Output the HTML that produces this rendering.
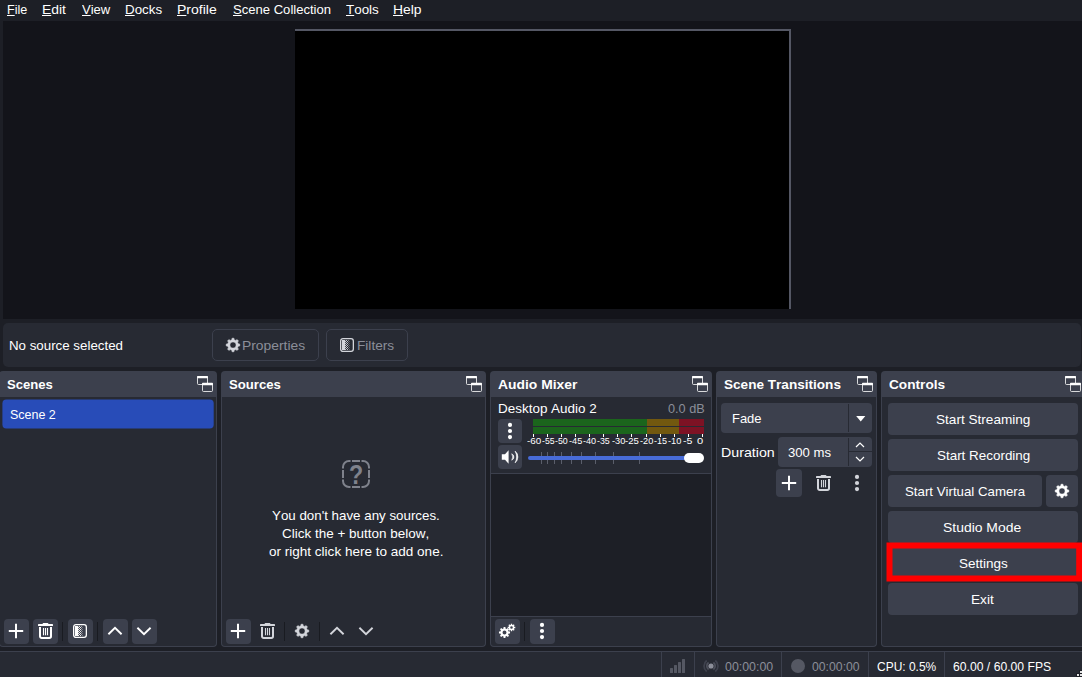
<!DOCTYPE html>
<html lang="en">
<head>
<meta charset="utf-8">
<title>OBS Studio</title>
<style>
html,body{margin:0;padding:0;}
body{width:1082px;height:677px;overflow:hidden;background:#1d1f26;position:relative;
 font-family:"Liberation Sans",sans-serif;font-size:13px;color:#fff;}
.a{position:absolute;}
.t{position:absolute;white-space:nowrap;line-height:16px;height:16px;transform-origin:0 50%;font-kerning:none;}
.c{text-align:center;transform-origin:50% 50%;}
.b{font-weight:bold;}
.m{color:#8b8e99;}
u{text-decoration:underline;text-underline-offset:1px;text-decoration-thickness:1px;}
#preview{left:3px;top:21px;width:1079px;height:298px;background:#13141a;}
#canvas{left:295px;top:29px;width:496px;height:280px;background:#545764;}
#canvas i{position:absolute;left:0;top:2px;width:494px;height:278px;background:#000;}
#ctx{left:3px;top:323px;width:1078px;height:44px;background:#272a33;border-radius:5px;}
.cbtn{position:absolute;top:329px;height:32px;border:1px solid #3c404d;border-radius:5px;box-sizing:border-box;}
.title{position:absolute;top:371px;height:26px;background:#3c404d;border-radius:4px 4px 0 0;}
.dock{position:absolute;top:397px;height:250px;background:#272a33;border:1px solid #3c404d;border-top:none;
 border-radius:0 0 4px 4px;box-sizing:border-box;}
.btn{position:absolute;background:#3c404d;border-radius:4px;}
.sep{position:absolute;width:1px;height:19px;top:622px;background:#191b21;}
svg{position:absolute;overflow:visible;}
#status{left:0;top:651px;width:1082px;height:26px;background:#272a33;border-top:1px solid #3c404d;box-sizing:border-box;}
.vs{position:absolute;top:652px;width:1px;height:25px;background:#3c404d;}
.tick{position:absolute;width:1px;background:#fff;}
.lbl{position:absolute;font-size:8.5px;line-height:10px;height:10px;white-space:nowrap;top:436px;transform-origin:50% 50%;}
</style>
</head>
<body>
<div class="t" style="left:6.67px;top:2px;transform:scaleX(0.9688);"><u>F</u>ile</div>
<div class="t" style="left:42.16px;top:2px;transform:scaleX(1.0688);"><u>E</u>dit</div>
<div class="t" style="left:81.94px;top:2px;transform:scaleX(1.0017);"><u>V</u>iew</div>
<div class="t" style="left:125.41px;top:2px;transform:scaleX(1.0265);"><u>D</u>ocks</div>
<div class="t" style="left:177.35px;top:2px;transform:scaleX(1.0794);"><u>P</u>rofile</div>
<div class="t" style="left:232.61px;top:2px;transform:scaleX(1.0050);"><u>S</u>cene Collection</div>
<div class="t" style="left:345.70px;top:2px;transform:scaleX(1.0313);"><u>T</u>ools</div>
<div class="t" style="left:393.36px;top:2px;transform:scaleX(1.0667);"><u>H</u>elp</div>
<div id="preview" class="a"></div><div id="canvas" class="a"><i></i></div>
<div id="ctx" class="a"></div>
<div class="t" style="left:8.51px;top:338px;transform:scaleX(1.0240);">No source selected</div>
<div class="cbtn" style="left:212px;width:107px"></div>
<div class="cbtn" style="left:326px;width:82px"></div>
<svg style="left:226px;top:338px" width="14" height="14" viewBox="0 0 14 14"><path d="M5.82 1.73 L5.98 0.23 L8.02 0.23 L8.18 1.73 L9.89 2.44 L11.07 1.49 L12.51 2.93 L11.56 4.11 L12.27 5.82 L13.77 5.98 L13.77 8.02 L12.27 8.18 L11.56 9.89 L12.51 11.07 L11.07 12.51 L9.89 11.56 L8.18 12.27 L8.02 13.77 L5.98 13.77 L5.82 12.27 L4.11 11.56 L2.93 12.51 L1.49 11.07 L2.44 9.89 L1.73 8.18 L0.23 8.02 L0.23 5.98 L1.73 5.82 L2.44 4.11 L1.49 2.93 L2.93 1.49 L4.11 2.44Z M3.90 7.00 a3.10 3.10 0 1 0 6.20 0 a3.10 3.10 0 1 0 -6.20 0Z" fill="#d3d5db" fill-rule="evenodd" stroke="#d3d5db" stroke-width=".5" stroke-linejoin="round"/></svg>
<svg style="left:340px;top:338px" width="14" height="14" viewBox="0 0 14 14"><rect x="0.65" y="0.65" width="12.7" height="12.7" rx="2.3" fill="none" stroke="#d3d5db" stroke-width="1.300"/><rect x="2" y="2" width="3.200" height="10" fill="#d3d5db"/><path d="M6 2h1v1h-1zM5 3h1v1h-1zM7 3h1v1h-1zM6 4h1v1h-1zM5 5h1v1h-1zM7 5h1v1h-1zM6 6h1v1h-1zM5 7h1v1h-1zM7 7h1v1h-1zM6 8h1v1h-1zM5 9h1v1h-1zM7 9h1v1h-1zM6 10h1v1h-1zM5 11h1v1h-1zM7 11h1v1h-1z" fill="#d3d5db" fill-opacity=".9"/><path d="M8 2h1v1h-1zM8 4h1v1h-1zM8 6h1v1h-1zM8 8h1v1h-1zM8 10h1v1h-1z" fill="#d3d5db" fill-opacity=".5"/><path d="M9 3h1v1h-1zM9 5h1v1h-1zM9 7h1v1h-1zM9 9h1v1h-1zM9 11h1v1h-1z" fill="#d3d5db" fill-opacity=".3"/></svg>
<div class="t m" style="left:242.36px;top:338px;transform:scaleX(1.0656);">Properties</div>
<div class="t m" style="left:356.58px;top:338px;transform:scaleX(1.0487);">Filters</div>
<div class="title" style="left:-1px;width:218px"></div>
<div class="dock" style="left:-1px;width:218px"></div>
<div class="t  b" style="left:6.82px;top:377px;transform:scaleX(1.0084);">Scenes</div>
<div class="title" style="left:221px;width:265px"></div>
<div class="dock" style="left:221px;width:265px"></div>
<div class="t  b" style="left:228.72px;top:377px;transform:scaleX(1.0120);">Sources</div>
<div class="title" style="left:490px;width:222px"></div>
<div class="dock" style="left:490px;width:222px"></div>
<div class="t  b" style="left:497.75px;top:377px;transform:scaleX(1.0667);">Audio Mixer</div>
<div class="title" style="left:716px;width:161px"></div>
<div class="dock" style="left:716px;width:161px"></div>
<div class="t  b" style="left:723.61px;top:377px;transform:scaleX(1.0444);">Scene Transitions</div>
<div class="title" style="left:881px;width:210px"></div>
<div class="dock" style="left:881px;width:210px"></div>
<div class="t  b" style="left:888.74px;top:377px;transform:scaleX(1.0501);">Controls</div>
<svg style="left:197px;top:376px" width="16" height="16" viewBox="0 0 16 16" fill="none" stroke="#fff"><rect x="0.5" y="0.5" width="10" height="8" rx="1" stroke-opacity=".8"/><rect x="0" y="0" width="11" height="2.2" rx=".8" fill="#fff" stroke="none"/><rect x="5.5" y="7.5" width="10" height="8" rx="1" fill="#3c404d" stroke-opacity=".8"/><rect x="5" y="6.800" width="11" height="2.4" rx=".8" fill="#fff" stroke="none"/></svg>
<svg style="left:466px;top:376px" width="16" height="16" viewBox="0 0 16 16" fill="none" stroke="#fff"><rect x="0.5" y="0.5" width="10" height="8" rx="1" stroke-opacity=".8"/><rect x="0" y="0" width="11" height="2.2" rx=".8" fill="#fff" stroke="none"/><rect x="5.5" y="7.5" width="10" height="8" rx="1" fill="#3c404d" stroke-opacity=".8"/><rect x="5" y="6.800" width="11" height="2.4" rx=".8" fill="#fff" stroke="none"/></svg>
<svg style="left:692px;top:376px" width="16" height="16" viewBox="0 0 16 16" fill="none" stroke="#fff"><rect x="0.5" y="0.5" width="10" height="8" rx="1" stroke-opacity=".8"/><rect x="0" y="0" width="11" height="2.2" rx=".8" fill="#fff" stroke="none"/><rect x="5.5" y="7.5" width="10" height="8" rx="1" fill="#3c404d" stroke-opacity=".8"/><rect x="5" y="6.800" width="11" height="2.4" rx=".8" fill="#fff" stroke="none"/></svg>
<svg style="left:857px;top:376px" width="16" height="16" viewBox="0 0 16 16" fill="none" stroke="#fff"><rect x="0.5" y="0.5" width="10" height="8" rx="1" stroke-opacity=".8"/><rect x="0" y="0" width="11" height="2.2" rx=".8" fill="#fff" stroke="none"/><rect x="5.5" y="7.5" width="10" height="8" rx="1" fill="#3c404d" stroke-opacity=".8"/><rect x="5" y="6.800" width="11" height="2.4" rx=".8" fill="#fff" stroke="none"/></svg>
<svg style="left:1065px;top:376px" width="16" height="16" viewBox="0 0 16 16" fill="none" stroke="#fff"><rect x="0.5" y="0.5" width="10" height="8" rx="1" stroke-opacity=".8"/><rect x="0" y="0" width="11" height="2.2" rx=".8" fill="#fff" stroke="none"/><rect x="5.5" y="7.5" width="10" height="8" rx="1" fill="#3c404d" stroke-opacity=".8"/><rect x="5" y="6.800" width="11" height="2.4" rx=".8" fill="#fff" stroke="none"/></svg>
<svg style="left:0;top:397px" width="217" height="34"><rect x="2.400" y="2.400" width="211.300" height="29.100" rx="4" fill="#284cb8"/></svg>
<div class="t" style="left:9.83px;top:407px;transform:scaleX(0.9600);">Scene 2</div>
<div class="btn" style="left:4px;top:619px;width:25px;height:25px"></div>
<div class="btn" style="left:33px;top:619px;width:25px;height:25px"></div>
<div class="btn" style="left:68px;top:619px;width:25px;height:25px"></div>
<div class="btn" style="left:103px;top:619px;width:25px;height:25px"></div>
<div class="btn" style="left:132px;top:619px;width:25px;height:25px"></div>
<div class="sep" style="left:62px"></div><div class="sep" style="left:97px"></div>
<svg style="left:8px;top:623px" width="16" height="16" viewBox="0 0 16 16"><path d="M8 0.800v14.400M0.800 8h14.400" stroke="#fff" stroke-width="2" fill="none"/></svg>
<svg style="left:38px;top:623px" width="15" height="16" viewBox="0 0 15 16" fill="none" stroke="#fff"><path d="M4.400 1.100L5.200 0h4.600l0.800 1.100z" fill="#fff" stroke="none"/><rect x="0" y="1" width="15" height="2" rx=".6" fill="#fff" stroke="none"/><path d="M2 4v9.300a1.700 1.700 0 0 0 1.700 1.700h7.600a1.700 1.700 0 0 0 1.700-1.700V4" stroke-width="2"/><path d="M5.500 5v7.200M7.500 5v7.200M9.500 5v7.200" stroke-width="1.100"/></svg>
<svg style="left:73px;top:624px" width="14" height="14" viewBox="0 0 14 14"><rect x="0.65" y="0.65" width="12.7" height="12.7" rx="2.3" fill="none" stroke="#fff" stroke-width="1.300"/><rect x="2" y="2" width="3.200" height="10" fill="#fff"/><path d="M6 2h1v1h-1zM5 3h1v1h-1zM7 3h1v1h-1zM6 4h1v1h-1zM5 5h1v1h-1zM7 5h1v1h-1zM6 6h1v1h-1zM5 7h1v1h-1zM7 7h1v1h-1zM6 8h1v1h-1zM5 9h1v1h-1zM7 9h1v1h-1zM6 10h1v1h-1zM5 11h1v1h-1zM7 11h1v1h-1z" fill="#fff" fill-opacity=".9"/><path d="M8 2h1v1h-1zM8 4h1v1h-1zM8 6h1v1h-1zM8 8h1v1h-1zM8 10h1v1h-1z" fill="#fff" fill-opacity=".5"/><path d="M9 3h1v1h-1zM9 5h1v1h-1zM9 7h1v1h-1zM9 9h1v1h-1zM9 11h1v1h-1z" fill="#fff" fill-opacity=".3"/></svg>
<svg style="left:115px;top:631.1px" width="1" height="1"><path d="M-6.6 3.2L0 -3.2L6.6 3.2" stroke="#fff" stroke-width="1.9" fill="none"/></svg>
<svg style="left:144px;top:630.8px" width="1" height="1"><path d="M-6.6 -3.2L0 3.2L6.6 -3.2" stroke="#fff" stroke-width="1.9" fill="none"/></svg>
<div class="btn" style="left:226px;top:619px;width:25px;height:25px"></div>
<div class="sep" style="left:284px"></div><div class="sep" style="left:319px"></div>
<svg style="left:230px;top:623px" width="16" height="16" viewBox="0 0 16 16"><path d="M8 0.800v14.400M0.800 8h14.400" stroke="#fff" stroke-width="2" fill="none"/></svg>
<svg style="left:260px;top:623px" width="15" height="16" viewBox="0 0 15 16" fill="none" stroke="#d3d5db"><path d="M4.400 1.100L5.200 0h4.600l0.800 1.100z" fill="#d3d5db" stroke="none"/><rect x="0" y="1" width="15" height="2" rx=".6" fill="#d3d5db" stroke="none"/><path d="M2 4v9.300a1.700 1.700 0 0 0 1.700 1.700h7.600a1.700 1.700 0 0 0 1.700-1.700V4" stroke-width="2"/><path d="M5.500 5v7.200M7.500 5v7.200M9.500 5v7.200" stroke-width="1.100"/></svg>
<svg style="left:295px;top:624px" width="14" height="14" viewBox="0 0 14 14"><path d="M5.82 1.73 L5.98 0.23 L8.02 0.23 L8.18 1.73 L9.89 2.44 L11.07 1.49 L12.51 2.93 L11.56 4.11 L12.27 5.82 L13.77 5.98 L13.77 8.02 L12.27 8.18 L11.56 9.89 L12.51 11.07 L11.07 12.51 L9.89 11.56 L8.18 12.27 L8.02 13.77 L5.98 13.77 L5.82 12.27 L4.11 11.56 L2.93 12.51 L1.49 11.07 L2.44 9.89 L1.73 8.18 L0.23 8.02 L0.23 5.98 L1.73 5.82 L2.44 4.11 L1.49 2.93 L2.93 1.49 L4.11 2.44Z M3.90 7.00 a3.10 3.10 0 1 0 6.20 0 a3.10 3.10 0 1 0 -6.20 0Z" fill="#d3d5db" fill-rule="evenodd" stroke="#d3d5db" stroke-width=".5" stroke-linejoin="round"/></svg>
<svg style="left:337px;top:631.1px" width="1" height="1"><path d="M-6.6 3.2L0 -3.2L6.6 3.2" stroke="#d3d5db" stroke-width="1.9" fill="none"/></svg>
<svg style="left:366px;top:630.8px" width="1" height="1"><path d="M-6.6 -3.2L0 3.2L6.6 -3.2" stroke="#d3d5db" stroke-width="1.9" fill="none"/></svg>
<svg style="left:342px;top:460px" width="28" height="28" viewBox="0 0 28 28" fill="none" stroke="#7f828c" stroke-width="2"><path d="M1 8.500V7a6 6 0 0 1 6-6h1.500M10 1h8M19.500 1H21a6 6 0 0 1 6 6v1.500M27 10v8M27 19.500V21a6 6 0 0 1-6 6h-1.500M18 27h-8M8.500 27H7a6 6 0 0 1-6-6v-1.500M1 18v-8"/><text transform="translate(14.100 24.400) scale(.84 1)" text-anchor="middle" font-family="Liberation Sans, sans-serif" font-weight="bold" font-size="27.700" fill="#7f828c" stroke="none">?</text></svg>
<div class="t" style="left:271.91px;top:508px;transform:scaleX(1.0255);">You don't have any sources.</div>
<div class="t" style="left:282.02px;top:526px;transform:scaleX(1.0366);">Click the + button below,</div>
<div class="t" style="left:268.83px;top:544px;transform:scaleX(1.0403);">or right click here to add one.</div>
<div class="a" style="left:491px;top:473px;width:220px;height:144px;background:#1d1f26;border-top:1px solid #3c404d;border-bottom:1px solid #3c404d;box-sizing:border-box"></div>
<div class="t" style="left:497.60px;top:401px;transform:scaleX(1.0355);">Desktop Audio 2</div>
<div class="t m" style="left:667.90px;top:401px;transform:scaleX(0.9755);">0.0 dB</div>
<div class="btn" style="left:498px;top:419px;width:24px;height:24px"></div>
<div class="btn" style="left:498px;top:445px;width:24px;height:24px"></div>
<svg style="left:510px;top:431px" width="1" height="1" fill="#fff"><circle cx="0" cy="-6.1" r="2.1"/><circle cx="0" cy="0" r="2.1"/><circle cx="0" cy="6.1" r="2.1"/></svg>
<svg style="left:501px;top:449px" width="18" height="16" viewBox="0 0 18 16"><path d="M0.800 5.200h3.200L7.600 1.300v13.400L4 10.800H0.800z" fill="#fff"/><path d="M10.700 4.800A3.430 3.430 0 0 1 10.700 11.200A5.600 5.600 0 0 0 10.700 4.800Z" fill="#fff" stroke="#fff" stroke-width=".6" stroke-linejoin="round"/><path d="M14.100 2.100A7.660 7.660 0 0 1 14.100 13.900A12.700 12.700 0 0 0 14.100 2.100Z" fill="#fff" stroke="#fff" stroke-width=".6" stroke-linejoin="round"/></svg>
<div class="a" style="left:533px;top:419px;width:171px;height:7px;background:linear-gradient(to right,#1b651c 0,#1b651c 114px,#72580f 114px,#72580f 146px,#7d1224 146px)"></div>
<div class="a" style="left:533px;top:427px;width:171px;height:7px;background:linear-gradient(to right,#1b651c 0,#1b651c 114px,#72580f 114px,#72580f 146px,#7d1224 146px)"></div>
<div class="tick" style="left:533px;top:434px;height:3px"></div>
<div class="t" style="left:527.46px;top:436px;transform:scaleX(1.0092);font-size:9.75px;line-height:10px;height:10px;">-60</div>
<div class="tick" style="left:547px;top:434px;height:3px"></div>
<div class="t" style="left:541.61px;top:436px;transform:scaleX(0.8906);font-size:9.75px;line-height:10px;height:10px;">-55</div>
<div class="tick" style="left:561px;top:434px;height:3px"></div>
<div class="t" style="left:555.01px;top:436px;transform:scaleX(0.9038);font-size:9.75px;line-height:10px;height:10px;">-50</div>
<div class="tick" style="left:575px;top:434px;height:3px"></div>
<div class="t" style="left:568.89px;top:436px;transform:scaleX(0.9435);font-size:9.75px;line-height:10px;height:10px;">-45</div>
<div class="tick" style="left:589px;top:434px;height:3px"></div>
<div class="t" style="left:583.20px;top:436px;transform:scaleX(0.9339);font-size:9.75px;line-height:10px;height:10px;">-40</div>
<div class="tick" style="left:603px;top:434px;height:3px"></div>
<div class="t" style="left:597.11px;top:436px;transform:scaleX(0.9057);font-size:9.75px;line-height:10px;height:10px;">-35</div>
<div class="tick" style="left:617px;top:434px;height:3px"></div>
<div class="t" style="left:611.79px;top:436px;transform:scaleX(0.9414);font-size:9.75px;line-height:10px;height:10px;">-30</div>
<div class="tick" style="left:631px;top:434px;height:3px"></div>
<div class="t" style="left:625.27px;top:436px;transform:scaleX(0.9812);font-size:9.75px;line-height:10px;height:10px;">-25</div>
<div class="tick" style="left:646px;top:434px;height:3px"></div>
<div class="t" style="left:639.79px;top:436px;transform:scaleX(0.9414);font-size:9.75px;line-height:10px;height:10px;">-20</div>
<div class="tick" style="left:660px;top:434px;height:3px"></div>
<div class="t" style="left:653.80px;top:436px;transform:scaleX(0.9284);font-size:9.75px;line-height:10px;height:10px;">-15</div>
<div class="tick" style="left:674px;top:434px;height:3px"></div>
<div class="t" style="left:667.99px;top:436px;transform:scaleX(0.9490);font-size:9.75px;line-height:10px;height:10px;">-10</div>
<div class="tick" style="left:688px;top:434px;height:3px"></div>
<div class="t" style="left:683.33px;top:436px;transform:scaleX(1.0860);font-size:9.75px;line-height:10px;height:10px;">-5</div>
<div class="tick" style="left:702px;top:434px;height:3px"></div>
<div class="t" style="left:697.47px;top:436px;transform:scaleX(1.1372);font-size:9.75px;line-height:10px;height:10px;">0</div>
<div class="a" style="left:541px;top:452px;width:1px;height:12px;background:#5a5e6b"></div>
<div class="a" style="left:547px;top:452px;width:1px;height:12px;background:#5a5e6b"></div>
<div class="a" style="left:554px;top:452px;width:1px;height:12px;background:#5a5e6b"></div>
<div class="a" style="left:561px;top:452px;width:1px;height:12px;background:#5a5e6b"></div>
<div class="a" style="left:571px;top:452px;width:1px;height:12px;background:#5a5e6b"></div>
<div class="a" style="left:581px;top:452px;width:1px;height:12px;background:#5a5e6b"></div>
<div class="a" style="left:595px;top:452px;width:1px;height:12px;background:#5a5e6b"></div>
<div class="a" style="left:613px;top:452px;width:1px;height:12px;background:#5a5e6b"></div>
<div class="a" style="left:639px;top:452px;width:1px;height:12px;background:#5a5e6b"></div>
<div class="a" style="left:528px;top:456px;width:170px;height:4px;border-radius:2px;background:#476bd7"></div>
<div class="a" style="left:684px;top:453px;width:20px;height:10px;border-radius:5px;background:#fff"></div>
<div class="btn" style="left:495px;top:619px;width:25px;height:25px"></div>
<div class="btn" style="left:530px;top:619px;width:25px;height:25px"></div>
<div class="sep" style="left:524px"></div>
<svg style="left:499px;top:627px" width="11" height="11" viewBox="0 0 10 10"><path d="M4.08 1.31 L4.16 -0.03 L5.84 -0.03 L5.92 1.31 L6.96 1.74 L7.97 0.85 L9.15 2.03 L8.26 3.04 L8.69 4.08 L10.03 4.16 L10.03 5.84 L8.69 5.92 L8.26 6.96 L9.15 7.97 L7.97 9.15 L6.96 8.26 L5.92 8.69 L5.84 10.03 L4.16 10.03 L4.08 8.69 L3.04 8.26 L2.03 9.15 L0.85 7.97 L1.74 6.96 L1.31 5.92 L-0.03 5.84 L-0.03 4.16 L1.31 4.08 L1.74 3.04 L0.85 2.03 L2.03 0.85 L3.04 1.74Z M3.20 5.00 a1.80 1.80 0 1 0 3.60 0 a1.80 1.80 0 1 0 -3.60 0Z" fill="#fff" fill-rule="evenodd"/></svg>
<svg style="left:508px;top:624px" width="7" height="7" viewBox="0 0 6 6"><path d="M2.42 0.67 L2.46 -0.26 L3.54 -0.26 L3.58 0.67 L4.24 0.94 L4.92 0.32 L5.68 1.08 L5.06 1.76 L5.33 2.42 L6.26 2.46 L6.26 3.54 L5.33 3.58 L5.06 4.24 L5.68 4.92 L4.92 5.68 L4.24 5.06 L3.58 5.33 L3.54 6.26 L2.46 6.26 L2.42 5.33 L1.76 5.06 L1.08 5.68 L0.32 4.92 L0.94 4.24 L0.67 3.58 L-0.26 3.54 L-0.26 2.46 L0.67 2.42 L0.94 1.76 L0.32 1.08 L1.08 0.32 L1.76 0.94Z M1.90 3.00 a1.10 1.10 0 1 0 2.20 0 a1.10 1.10 0 1 0 -2.20 0Z" fill="#fff" fill-rule="evenodd"/></svg>
<svg style="left:542px;top:631px" width="1" height="1" fill="#fff"><circle cx="0" cy="-6.1" r="2.1"/><circle cx="0" cy="0" r="2.1"/><circle cx="0" cy="6.1" r="2.1"/></svg>
<div class="btn" style="left:721px;top:403px;width:151px;height:30px"></div>
<div class="a" style="left:848px;top:404px;width:1px;height:28px;background:#272a33"></div>
<svg style="left:855.9px;top:415.800px" width="9.500" height="5.500" viewBox="0 0 10 6"><path d="M0 0h10L5 6z" fill="#fff"/></svg>
<div class="t" style="left:731.74px;top:411px;transform:scaleX(0.9969);">Fade</div>
<div class="t" style="left:720.63px;top:445px;transform:scaleX(1.0926);">Duration</div>
<div class="btn" style="left:778px;top:437px;width:94px;height:30px"></div>
<div class="a" style="left:848px;top:438px;width:1px;height:28px;background:#272a33"></div>
<div class="a" style="left:849px;top:451px;width:23px;height:1px;background:#272a33"></div>
<div class="t" style="left:788.40px;top:445px;transform:scaleX(1.0104);">300 ms</div>
<svg style="left:860px;top:445.3px" width="1" height="1"><path d="M-4.0 2.0L0 -2.0L4.0 2.0" stroke="#fff" stroke-width="1.2" fill="none"/></svg>
<svg style="left:860px;top:458.8px" width="1" height="1"><path d="M-4.0 -2.0L0 2.0L4.0 -2.0" stroke="#fff" stroke-width="1.2" fill="none"/></svg>
<div class="btn" style="left:776px;top:469px;width:26px;height:28px"></div>
<svg style="left:781px;top:475px" width="16" height="16" viewBox="0 0 16 16"><path d="M8 0.800v14.400M0.800 8h14.400" stroke="#fff" stroke-width="2" fill="none"/></svg>
<svg style="left:816px;top:475px" width="15" height="16" viewBox="0 0 15 16" fill="none" stroke="#d3d5db"><path d="M4.400 1.100L5.200 0h4.600l0.800 1.100z" fill="#d3d5db" stroke="none"/><rect x="0" y="1" width="15" height="2" rx=".6" fill="#d3d5db" stroke="none"/><path d="M2 4v9.300a1.700 1.700 0 0 0 1.700 1.700h7.600a1.700 1.700 0 0 0 1.700-1.700V4" stroke-width="2"/><path d="M5.500 5v7.200M7.500 5v7.200M9.500 5v7.200" stroke-width="1.100"/></svg>
<svg style="left:857px;top:483px" width="1" height="1" fill="#d3d5db"><circle cx="0" cy="-6.1" r="2.1"/><circle cx="0" cy="0" r="2.1"/><circle cx="0" cy="6.1" r="2.1"/></svg>
<div class="btn" style="left:888px;top:403px;width:190px;height:32px"></div>
<div class="t" style="left:935.58px;top:412px;transform:scaleX(1.0452);">Start Streaming</div>
<div class="btn" style="left:888px;top:439px;width:190px;height:32px"></div>
<div class="t" style="left:936.69px;top:448px;transform:scaleX(1.0327);">Start Recording</div>
<div class="btn" style="left:888px;top:475px;width:154px;height:32px"></div>
<div class="btn" style="left:1046px;top:475px;width:32px;height:32px"></div>
<div class="t" style="left:904.60px;top:484px;transform:scaleX(1.0199);">Start Virtual Camera</div>
<svg style="left:1055px;top:484px" width="14" height="14" viewBox="0 0 14 14"><path d="M5.82 1.73 L5.98 0.23 L8.02 0.23 L8.18 1.73 L9.89 2.44 L11.07 1.49 L12.51 2.93 L11.56 4.11 L12.27 5.82 L13.77 5.98 L13.77 8.02 L12.27 8.18 L11.56 9.89 L12.51 11.07 L11.07 12.51 L9.89 11.56 L8.18 12.27 L8.02 13.77 L5.98 13.77 L5.82 12.27 L4.11 11.56 L2.93 12.51 L1.49 11.07 L2.44 9.89 L1.73 8.18 L0.23 8.02 L0.23 5.98 L1.73 5.82 L2.44 4.11 L1.49 2.93 L2.93 1.49 L4.11 2.44Z M3.90 7.00 a3.10 3.10 0 1 0 6.20 0 a3.10 3.10 0 1 0 -6.20 0Z" fill="#fff" fill-rule="evenodd" stroke="#fff" stroke-width=".5" stroke-linejoin="round"/></svg>
<div class="btn" style="left:888px;top:511px;width:190px;height:32px"></div>
<div class="t" style="left:943.47px;top:520px;transform:scaleX(1.0707);">Studio Mode</div>
<div class="btn" style="left:888px;top:547px;width:190px;height:32px"></div>
<div class="t" style="left:958.59px;top:556px;transform:scaleX(1.0368);">Settings</div>
<div class="btn" style="left:888px;top:583px;width:190px;height:32px"></div>
<div class="t" style="left:971.38px;top:592px;transform:scaleX(1.0483);">Exit</div>
<svg style="left:0;top:0" width="1082" height="677"><rect x="889.5" y="545.5" width="189.7" height="33" fill="none" stroke="#ff0000" stroke-width="6"/></svg>
<div id="status" class="a"></div>
<div class="vs" style="left:661px"></div>
<div class="vs" style="left:694px"></div>
<div class="vs" style="left:781px"></div>
<div class="vs" style="left:868px"></div>
<div class="vs" style="left:944px"></div>
<div class="a" style="left:670px;top:668px;width:3px;height:5px;background:#555863;border-radius:.5px"></div>
<div class="a" style="left:674px;top:665px;width:3px;height:8px;background:#555863;border-radius:.5px"></div>
<div class="a" style="left:678px;top:662px;width:3px;height:11px;background:#555863;border-radius:.5px"></div>
<div class="a" style="left:682px;top:659px;width:3px;height:14px;background:#555863;border-radius:.5px"></div>
<svg style="left:711px;top:666px" width="1" height="1" fill="none"><circle r="2.600" fill="#8b8e99"/><path d="M-2.400 -3.440a4.200 4.200 0 0 0 0 6.880M2.400 -3.440a4.200 4.200 0 0 1 0 6.880" stroke="#4d505c" stroke-width="1.700"/><path d="M-4.300 -5.500a7 7 0 0 0 0 11M4.300 -5.500a7 7 0 0 1 0 11" stroke="#3f424e" stroke-width="1.700"/></svg>
<div class="t m" style="left:725.02px;top:659px;transform:scaleX(0.9518);">00:00:00</div>
<div class="a" style="left:791px;top:659px;width:14px;height:14px;border-radius:7px;background:#555863"></div>
<div class="t m" style="left:812.12px;top:659px;transform:scaleX(0.9418);">00:00:00</div>
<div class="t" style="left:876.79px;top:659px;transform:scaleX(0.9212);">CPU: 0.5%</div>
<div class="t" style="left:952.68px;top:659px;transform:scaleX(0.9369);">60.00 / 60.00 FPS</div>
<div class="a" style="left:1080px;top:671px;width:2px;height:2px;background:#e4e4e4;box-shadow:0 0 0 1px #1d1f26"></div>
<div class="a" style="left:1077px;top:674px;width:2px;height:2px;background:#e4e4e4;box-shadow:0 0 0 1px #1d1f26"></div>
<div class="a" style="left:1080px;top:674px;width:2px;height:2px;background:#e4e4e4;box-shadow:0 0 0 1px #1d1f26"></div>
</body>
</html>
